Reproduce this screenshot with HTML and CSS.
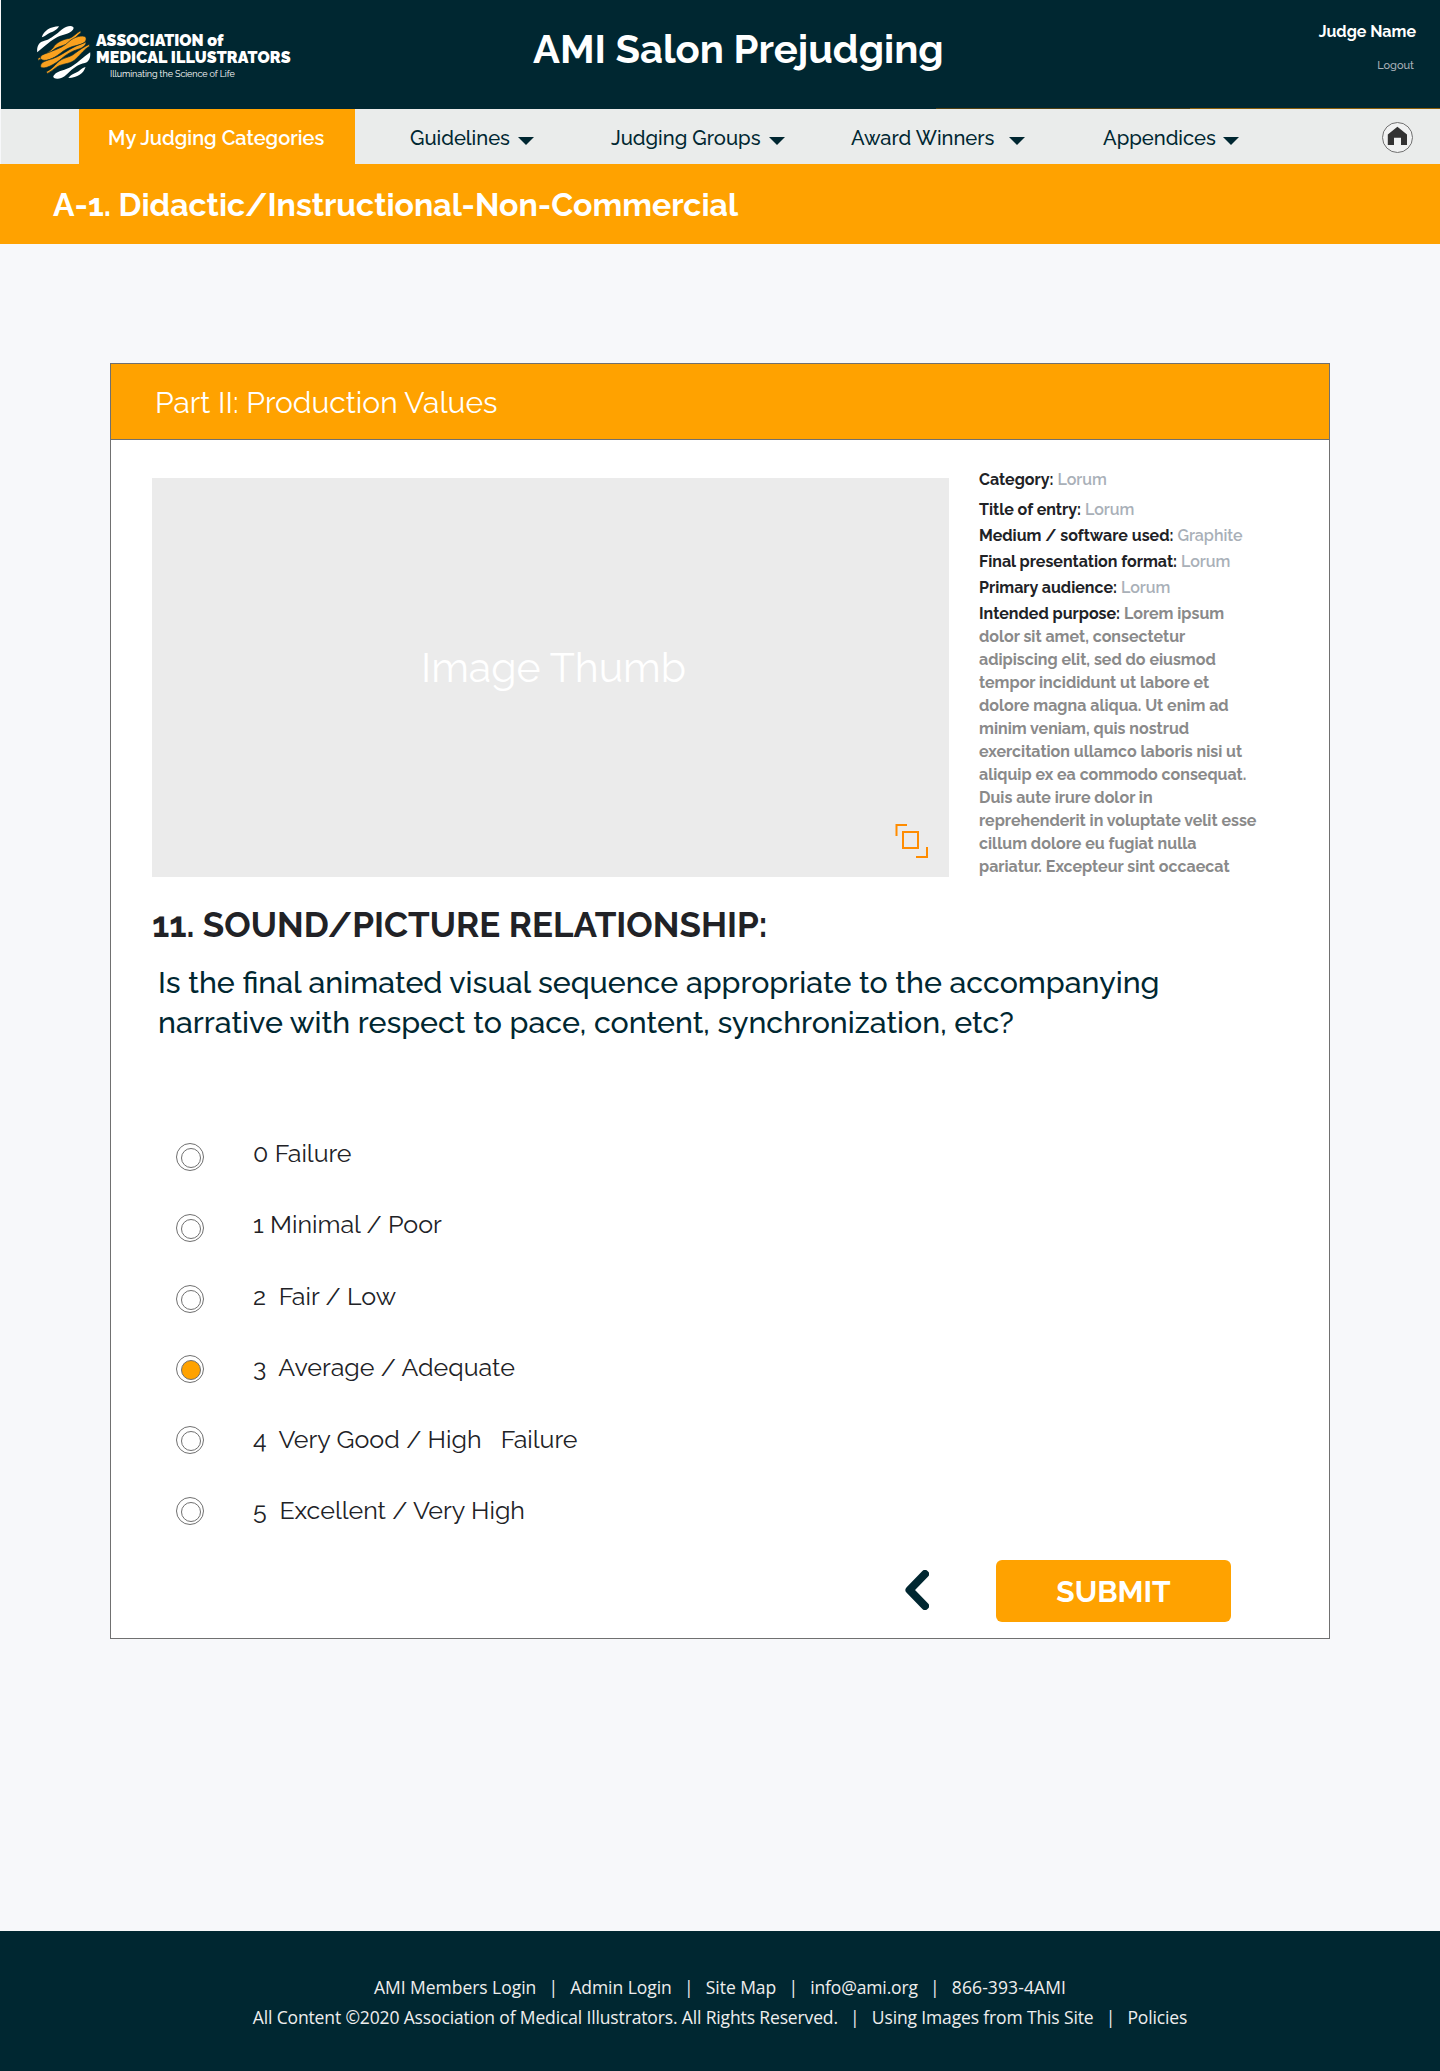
FILE: index.html
```html
<!DOCTYPE html>
<html lang="en">
<head>
<meta charset="utf-8">
<title>AMI Salon Prejudging</title>
<link rel="stylesheet" href="styles.css">
</head>
<body>
<header class="header">
  <div class="brand">
    <svg class="brand-mark" viewBox="0 0 162 160" width="54" height="53">
      <g fill="#fff">
        <path d="M14 34C20 14 40 2 66 1C58 16 42 18 32 24C26 28 20 33 14 34Z"/>
        <path d="M0 79C-1 62 4 50 18 46C36 42 44 34 56 26C74 12 84 0 100 0C110 1 112 6 108 11C98 26 74 24 56 36C32 50 18 66 0 79Z"/>
        <path d="M160 79C162 96 156 108 144 112C124 116 116 124 104 132C88 148 76 160 60 159C48 158 46 152 52 147C62 134 86 134 104 122C126 108 140 92 160 79Z"/>
        <path d="M146 124C140 144 122 156 94 157C102 144 118 142 128 134C134 130 140 125 146 124Z"/>
      </g>
      <g fill="#f9a11f" stroke="#002731" stroke-width="2">
        <path d="M2 98C22 88 38 78 48 66C58 48 80 40 98 37C108 33 118 22 131 14L132 20C120 28 112 42 100 49C84 60 66 60 52 70C38 80 20 98 3 104Z"/>
        <path d="M10 98C8 84 30 84 44 76C66 68 84 60 96 47C112 32 138 26 147 34C152 48 136 56 122 58C100 62 82 72 68 84C50 98 20 112 10 98Z"/>
        <path d="M10 122C10 108 30 104 46 99C66 92 82 80 98 71C118 58 138 54 147 48C150 56 138 66 124 70C104 76 88 86 74 98C56 114 18 136 10 122Z"/>
        <path d="M28 138C44 130 52 120 62 110C78 94 98 96 112 84C128 72 142 62 158 55L158 61C142 70 132 86 118 98C102 116 80 112 62 122C50 130 42 138 30 144Z"/>
      </g>
    </svg>
    <div class="brand-text">
      <span class="brand-name">ASSOCIATION of</span>
      <span class="brand-name wide">MEDICAL ILLUSTRATORS</span>
      <span class="tagline">Illuminating the Science of Life</span>
    </div>
  </div>
  <h1 class="title">AMI Salon Prejudging</h1>
  <div class="account">
    <strong class="judge">Judge Name</strong>
    <a class="logout">Logout</a>
  </div>
</header>
<nav class="nav">
  <a class="nav-item active">My Judging Categories</a>
  <a class="nav-item guidelines">Guidelines</a>
  <a class="nav-item groups">Judging Groups</a>
  <a class="nav-item winners">Award Winners</a>
  <a class="nav-item appendices">Appendices</a>
  <a class="home"><svg viewBox="0 0 31 31" width="31" height="31"><circle cx="15.500" cy="15.500" r="15" fill="#f1f2f2" stroke="#707070"/><path d="M15.400 4.700L25 12.500V23H19V15.700H12V23H5.800V12.500Z" fill="#333"/></svg></a>
</nav>
<h2 class="banner">A-1. Didactic/Instructional-Non-Commercial</h2>
<main class="card">
  <h3 class="card-head">Part II: Production Values</h3>
  <div class="entry">
    <div class="thumb">Image Thumb
      <svg class="expand" viewBox="0 0 34 36" width="34" height="36" fill="none" stroke="#ff8c00" stroke-width="2"><path d="M12 2H1.500V13M32 24V34H21"/><rect x="8" y="9" width="15" height="16"/></svg>
    </div>
    <div class="details">
      <p class="category"><b>Category:</b> <span>Lorum</span></p>
      <p><b>Title of entry:</b> <span>Lorum</span></p>
      <p><b>Medium / software used:</b> <span>Graphite</span></p>
      <p><b>Final presentation format:</b> <span>Lorum</span></p>
      <p><b>Primary audience:</b> <span>Lorum</span></p>
      <p class="purpose"><b>Intended purpose:</b> Lorem ipsum dolor sit amet, consectetur adipiscing elit, sed do eiusmod tempor incididunt ut labore et dolore magna aliqua. Ut enim ad minim veniam, quis nostrud exercitation ullamco laboris nisi ut aliquip ex ea commodo consequat. Duis aute irure dolor in reprehenderit in voluptate velit esse cillum dolore eu fugiat nulla pariatur. Excepteur sint occaecat</p>
    </div>
  </div>
  <h4 class="heading">11. SOUND/PICTURE RELATIONSHIP:</h4>
  <p class="question">Is the final animated visual sequence appropriate to the accompanying narrative with respect to pace, content, synchronization, etc?</p>
  <div class="options">
    <label class="option"><i class="radio"></i><span class="label">0 Failure</span></label>
    <label class="option"><i class="radio"></i><span class="label">1 Minimal / Poor</span></label>
    <label class="option"><i class="radio"></i><span class="label">2  Fair / Low</span></label>
    <label class="option"><i class="radio on"></i><span class="label">3  Average / Adequate</span></label>
    <label class="option"><i class="radio"></i><span class="label">4  Very Good / High   Failure</span></label>
    <label class="option"><i class="radio"></i><span class="label">5  Excellent / Very High</span></label>
  </div>
  <div class="actions">
    <svg class="back" viewBox="0 0 24 40" width="24" height="40" fill="none" stroke="#002731" stroke-width="8" stroke-linecap="round" stroke-linejoin="round"><path d="M20 4L4.500 20L20 36"/></svg>
    <button class="submit">SUBMIT</button>
  </div>
</main>
<footer class="footer">
  <div class="row"><a>AMI Members Login</a><i>|</i><a>Admin Login</a><i>|</i><a>Site Map</a><i>|</i><a class="mail">info@ami.org</a><i>|</i><a class="phone">866-393-4AMI</a></div>
  <div class="row legal"><span>All Content ©2020 Association of Medical Illustrators. All Rights Reserved.</span><i>|</i><a>Using Images from This Site</a><i>|</i><a>Policies</a></div>
</footer>
</body>
</html>
```
FILE: styles.css
```css
* { box-sizing: border-box; margin: 0; padding: 0; }
body { background: #f7f8fa; font-family: Raleway, Lato, sans-serif; font-variant-numeric: oldstyle-nums; color: #212226; height: 2071px; display: flex; flex-direction: column; }

.header { height: 109px; flex: none; margin-left: 1px; background: linear-gradient(90deg, #4f4013 254px, #8a5f0b 254px) right bottom / 504px 1px no-repeat #002731; color: #fff; display: grid; grid-template-columns: 532px 1fr 160px; align-items: start; white-space: nowrap; }
.brand { display: flex; padding-left: 36px; }
.brand-mark { margin-top: 26px; }
.brand-text { margin: 32px 0 0 5px; display: flex; flex-direction: column; }
.brand-name { font-size: 16px; line-height: 17px; font-weight: 900; }
.wide { letter-spacing: 0.12px; }
.tagline { font-size: 9px; line-height: 12px; margin: 2px 0 0 14px; letter-spacing: -0.1px; }
.title { font-size: 40px; line-height: 48px; font-weight: 700; margin-top: 25px; }
.account { padding: 22px 24px 0 0; display: flex; flex-direction: column; align-items: flex-end; }
.judge { font-size: 16px; line-height: 19px; }
.logout { font-size: 11px; line-height: 13px; margin: 18px 2px 0 0; font-weight: 500; color: #a9b1b8; }

.nav { height: 55px; flex: none; margin-left: 1px; background: #eaeceb; display: flex; font-size: 20.2px; line-height: 24px; font-weight: 500; color: #002731; padding-left: 78px; white-space: nowrap; }
.nav-item { display: flex; justify-content: space-between; align-items: flex-start; height: 55px; padding-top: 17px; }
.nav-item:not(.active)::after { content: ""; border: 8px solid transparent; border-top-color: #002731; border-bottom: 0; margin-top: 11px; }
.active { width: 276px; background: #ffa200; color: #fff; font-size: 20px; font-weight: 600; padding-left: 29px; }
.guidelines { width: 124px; margin-left: 55px; }
.groups { width: 174px; margin-left: 77px; }
.winners { width: 174px; margin-left: 66px; }
.appendices { width: 136px; margin-left: 78px; }
.home { margin: 13px 0 0 auto; padding-right: 27px; line-height: 0; }

.banner { height: 80px; flex: none; background: #ffa200; color: #fff; font-size: 32px; line-height: 37px; padding: 22px 0 0 53px; }

.card { width: 1220px; height: 1276px; flex: none; margin: 119px 0 0 110px; background: #fff; border: 1px solid #707070; }
.card-head { height: 76px; background: #ffa200; border-bottom: 1px solid #707070; color: #fff; font-size: 30px; line-height: 35px; font-weight: 400; padding: 21px 0 0 44px; }
.entry { display: flex; height: 437px; padding: 38px 0 0 41px; }
.thumb { width: 797px; height: 399px; background: #ebebeb; color: #fff; font-size: 41px; line-height: 49px; padding: 165px 0 0 269px; position: relative; }
.expand { position: absolute; left: 743px; top: 345px; }
.details { width: 284px; margin: -10px 0 0 30px; font-size: 16px; line-height: 23px; font-weight: 600; color: #a9b0b8; }
.details p { margin-bottom: 3px; }
.details .category { margin-bottom: 7px; }
.details b { color: #212226; font-weight: 700; }
.details .purpose { color: #8a8a8a; font-weight: 700; }

.heading { font-size: 35px; line-height: 41px; font-weight: 700; margin: 27px 0 0 41px; }
.question { width: 1040px; font-size: 30.35px; line-height: 40px; font-weight: 500; color: #002731; margin: 17px 0 0 47px; }

.options { margin: 95px 0 0 65px; font-size: 25px; line-height: 30px; }
.option { height: 71px; display: flex; align-items: flex-start; }
.label { white-space: pre; margin-top: 1px; }
.radio { width: 28px; height: 28px; border: 1px solid #707070; border-radius: 50%; padding: 4px; margin: 6px 49px 0 0; }
.radio::after { content: ""; display: block; width: 18px; height: 18px; border: 1px solid #707070; border-radius: 50%; }
.on::after { background: #ffa200; }
.option:nth-child(n+3) .label { margin-top: 2px; }
.option:nth-child(n+4) .radio { margin-top: 5px; }
.option:nth-child(n+5) .label { margin-top: 3px; }

.actions { display: flex; align-items: center; margin: -3px 0 0 794px; }
.back { margin-bottom: 2px; }
.submit { width: 235px; height: 62px; border: 0; border-radius: 6px; background: #ffa200; color: #fff; font: 700 30px/35px Raleway, sans-serif; margin-left: 67px; }

.footer { margin-top: auto; height: 140px; background: #002731; color: #eee; font: 17.5px/30px "Open Sans", "Noto Sans", sans-serif; padding-top: 41px; display: flex; flex-direction: column; align-items: center; }
.row { display: flex; }
.row i { font-style: normal; width: 34px; text-align: center; }
.row a { letter-spacing: -0.04px; }
.row .mail { letter-spacing: -0.15px; }
.row .phone { letter-spacing: 0.1px; }
.legal, .legal a { letter-spacing: -0.14px; }
```
